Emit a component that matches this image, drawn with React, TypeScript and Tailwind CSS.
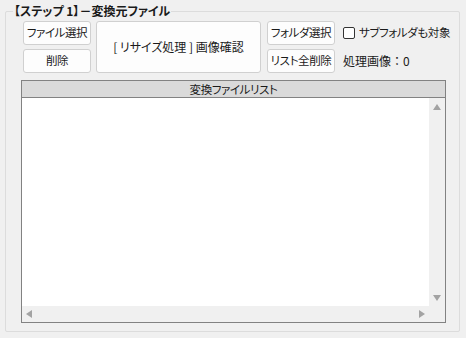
const font = { fontFamily: '"Noto Sans CJK JP", "Noto Sans", sans-serif' };

function Btn({ label, className = "" }: { label: string; className?: string }) {
  return (
    <button
      className={
        "flex items-center justify-center whitespace-nowrap rounded-[3px] border border-[#d0d0d0] bg-[#fdfdfd] text-[#1a1a1a] " +
        className
      }
    >
      {label}
    </button>
  );
}

function Tri({ dir }: { dir: "up" | "down" | "left" | "right" }) {
  const pts = {
    up: "4,0 8,6 0,6",
    down: "0,0 8,0 4,6",
    left: "6,0 6,8 0,4",
    right: "0,0 6,4 0,8",
  }[dir];
  const vert = dir === "up" || dir === "down";
  return (
    <svg width={vert ? 8 : 6} height={vert ? 6 : 8} viewBox={vert ? "0 0 8 6" : "0 0 6 8"}>
      <polygon points={pts} fill="#a3a3a3" />
    </svg>
  );
}

export default function App() {
  return (
    <div
      className="h-[338px] w-[466px] bg-[#f0f0f0] pt-[11px] pl-[5px] pr-[6px] [font-feature-settings:'palt']"
      style={font}
    >
      <div className="flex h-[321px] flex-col rounded-[2px] border border-[#dcdcdc]">
        <div className="-mt-[9px] ml-[7px] h-[16px] w-fit whitespace-nowrap bg-[#f0f0f0] px-[1px] text-[12px] leading-[16px] font-bold text-[#1a1a1a]">
          【ステップ 1】－変換元ファイル
        </div>

        <div className="mt-[2px] ml-[17px] flex">
          <div className="flex w-[68px] flex-col gap-[4px] text-[11.5px] tracking-[-0.4px]">
            <Btn label="ファイル選択" className="h-[24px]" />
            <Btn label="削除" className="h-[24px]" />
          </div>
          <Btn label="[ リサイズ処理 ] 画像確認" className="ml-[5px] h-[52px] w-[165px] text-[12px]" />
          <div className="ml-[6px] flex w-[68px] flex-col gap-[4px] text-[11.5px] tracking-[-0.4px]">
            <Btn label="フォルダ選択" className="h-[24px]" />
            <Btn label="リスト全削除" className="h-[24px]" />
          </div>
          <div className="ml-[8px] flex flex-col whitespace-nowrap text-[#1a1a1a]">
            <label className="flex h-[24px] items-center gap-[4px] text-[11.5px] tracking-[-0.4px]">
              <span className="h-[12px] w-[12px] rounded-[2px] border border-[#333] bg-white" />
              サブフォルダも対象
            </label>
            <div className="mt-[4px] flex h-[24px] items-center text-[12px] [font-feature-settings:normal]">
              処理画像：0
            </div>
          </div>
        </div>

        <div className="mt-[7px] ml-[15px] flex h-[243px] w-[425px] flex-col border border-[#828282]">
          <div className="h-[17px] whitespace-nowrap border-b border-[#828282] bg-[#dadada] text-center text-[11.5px] leading-[16px] tracking-[-0.4px] text-[#1a1a1a]">
            変換ファイルリスト
          </div>
          <div className="flex flex-1">
            <div className="flex flex-1 flex-col">
              <div className="flex-1 bg-white" />
              <div className="flex h-[16px] items-center justify-between bg-[#f0f0f0] px-[4px]">
                <Tri dir="left" />
                <Tri dir="right" />
              </div>
            </div>
            <div className="flex w-[16px] flex-col items-center bg-[#f0f0f0] pt-[6px] pb-[21px]">
              <Tri dir="up" />
              <div className="flex-1" />
              <Tri dir="down" />
            </div>
          </div>
        </div>
      </div>
    </div>
  );
}
